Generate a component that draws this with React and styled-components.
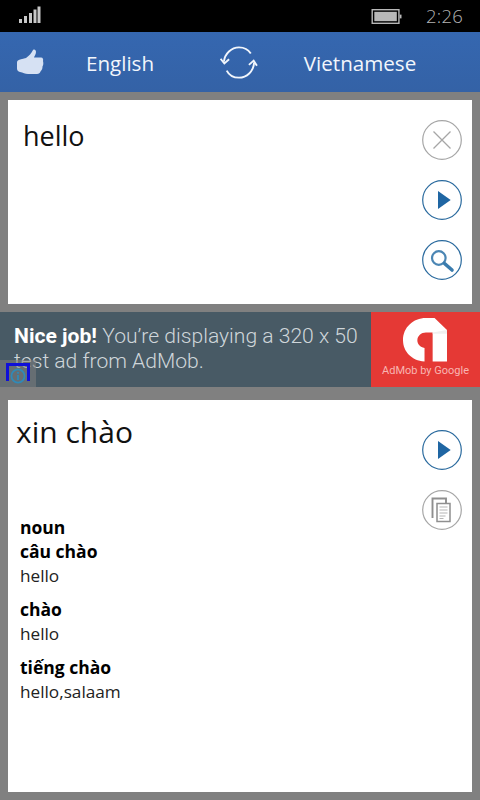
import React from "react";
import styled, { createGlobalStyle } from "styled-components";

const Global = createGlobalStyle`
  html, body { margin: 0; padding: 0; background: #808080; }
  body { font-family: "Open Sans", "Noto Sans", sans-serif; }
`;
const Screen = styled.div`
  width: 480px; height: 800px; background: #808080; display: flex; flex-direction: column; overflow: hidden;
`;
const StatusBar = styled.div`
  height: 32px; background: #000; display: flex; align-items: center; justify-content: space-between;
  padding: 0 17px 0 19px; box-sizing: border-box; color: #b4b4b4;
`;
const StatusRight = styled.div`display: flex; align-items: center; gap: 24px;`;
const Clock = styled.span`font-size: 18.5px; font-weight: 300; line-height: 32px; letter-spacing: 0.2px;`;
const Header = styled.header`
  height: 60px; background: linear-gradient(#3567b0, #3462a6); display: flex; align-items: center;
  color: #f2f6fc; margin-bottom: 8px;
`;
const ThumbSlot = styled.div`width: 60px; padding-left: 16px; box-sizing: border-box; display: flex; align-items: center;`;
const Lang = styled.div`
  font-size: 20.6px; line-height: 60px; text-align: center; width: ${p => p.$w}px; padding-top: 1px;
`;
const SwapSlot = styled.div`width: 118px; display: flex; justify-content: center; padding-top: 1px;`;
const Panel = styled.section`
  background: #fff; margin: 0 8px; height: ${p => p.$h}px; display: flex; justify-content: space-between;
  box-sizing: border-box;
`;
const InputText = styled.div`font-size: 27px; line-height: 36px; color: #111; padding: 18px 0 0 15px; font-weight: 400;`;
const Buttons = styled.div`
  display: flex; flex-direction: column; gap: ${p => p.$gap}px; padding: ${p => p.$top}px 10px 0 0; flex: none;
`;
const Ad = styled.div`
  height: 75px; margin-top: 8px; margin-bottom: 13px; background: #485a65; display: flex; position: relative; font-family: Roboto, sans-serif;
`;
const AdText = styled.div`
  width: 371px; box-sizing: border-box; padding: 11px 0 0 14px; font-size: 21.1px; line-height: 25px; color: #cfd6da; font-weight: 300;
  strong { color: #fff; font-weight: 700; }
`;
const AdLogo = styled.div`
  width: 109px; background: #e53935; display: flex; flex-direction: column; align-items: center; color: #f8b5b2;
  font-size: 11px; padding-top: 6px; box-sizing: border-box; gap: 2px; white-space: nowrap;
`;
const InfoBadge = styled.div`
  position: absolute; left: 0; top: 48px; width: 36px; height: 27px; background: rgba(128,128,128,0.55);
`;
const InfoFrame = styled.div`
  position: absolute; left: 6px; top: 3px; width: 24px; height: 18px; box-sizing: border-box;
  border: 3px solid #0f10d8; border-bottom: 0; padding-top: 2px;
  display: flex; justify-content: center;
`;
const Result = styled.div`display: flex; flex-direction: column; flex: 1;`;
const Translated = styled.div`font-size: 30px; line-height: 40px; color: #111; padding: 12px 0 0 8px;`;
const Defs = styled.div`padding: 63px 0 0 12px; color: #111; font-size: 17.5px; line-height: 24px;`;
const DefGroup = styled.div`margin-bottom: 9px;`;
const Bold = styled.div`font-weight: 700; color: #000; line-height: 24px;`;
const Word = styled.div`font-weight: 400; color: #222; line-height: 25px; font-size: 17.2px;`;

const Circle = ({ color, children }) => (
  <svg width="40" height="40" viewBox="0 0 40 40" fill="none" style={{ display: "block" }}>
    <circle cx="20" cy="20" r="19.3" stroke={color} strokeWidth="1.2" />
    {children}
  </svg>
);
const BLUE = "#2a6a9e";
const GREY = "#a6a6a6";
const Close = () => <Circle color={GREY}><path d="M11.5 11.5L28.5 28.5M28.5 11.5L11.5 28.5" stroke={GREY} strokeWidth="1.3" /></Circle>;
const Play = () => <Circle color={BLUE}><path d="M16 11L28.7 20L16 29Z" fill="#1f66a3" /></Circle>;
const Search = () => (
  <Circle color={BLUE}>
    <circle cx="16.8" cy="18" r="6.8" stroke="#4b86b4" strokeWidth="2.2" />
    <path d="M22.5 23.5L30 30" stroke="#3a7cae" strokeWidth="3.6" strokeLinecap="round" />
  </Circle>
);
const Copy = () => (
  <Circle color={GREY}>
    <path d="M10.5 28V8.5H24V13" stroke="#8f8f8f" strokeWidth="1.9" />
    <path d="M15 13.5H28V31.5H15Z" stroke="#8f8f8f" strokeWidth="1.5" fill="#fff" />
    <path d="M17.5 17H25.5M17.5 20H25.5M17.5 23H25.5M17.5 26H23.5M17.5 28.5H21.5" stroke="#b5b5b5" strokeWidth="1.2" />
  </Circle>
);
const Signal = () => (
  <svg width="22" height="18" viewBox="0 0 22 18" fill="#c8c8c8" style={{ display: "block", marginTop: -2 }}>
    <rect x="0" y="13" width="3" height="4" /><rect x="5" y="10" width="3" height="7" /><rect x="10" y="7" width="3" height="10" />
    <rect x="14.5" y="3.5" width="3" height="13.5" /><rect x="18.5" y="0.5" width="3" height="16.5" />
  </svg>
);
const Battery = () => (
  <svg width="31" height="15" viewBox="0 0 32 16" style={{ display: "block" }}>
    <rect x="0.75" y="0.75" width="28.5" height="14.5" fill="none" stroke="#b8b8b8" strokeWidth="1.5" />
    <rect x="3" y="3" width="24" height="10" fill="#b8b8b8" />
    <rect x="30" y="6" width="2" height="4" fill="#b8b8b8" />
  </svg>
);
const Thumb = () => (
  <svg width="28" height="26" viewBox="0 0 28 26" style={{ display: "block" }}>
    <path fill="#d6e1f3" d="M1 13.5C1 11.5 2.5 11 4 10.5L10 9C13 7 15.5 4 17 1C18.5 0 20 1 20 3C20 5 18.5 7 18 8.5L25 8.5C27 8.5 27.5 10.5 27 12C27.5 14 27.5 16 26.5 17.5C26.5 19.5 26 21 24.5 22.5C24 24 23 25 21 25L12 25C9 25 7 23.5 4 23C2 22.5 1 21.5 1 19.5Z" />
  </svg>
);
const Swap = () => (
  <svg width="38" height="34" viewBox="0 0 40 36" fill="none" stroke="#f2f6fc" strokeWidth="2" style={{ display: "block" }}>
    <path d="M4 16.5C5 8 12 1.5 20 1.5C25.5 1.5 30 4 32.5 8" />
    <path d="M36 17.5C35.5 27 28 33.5 20 33.5C14 33.5 9.5 31 7 26" />
    <path d="M0.5 13.5L4.5 18.5L9.5 14" />
    <path d="M30.5 20L35.5 15.5L39 21" />
  </svg>
);
const AdMobMark = () => (
  <svg width="44" height="44" viewBox="0 0 46 50" preserveAspectRatio="none" style={{ display: "block", marginLeft: -1 }}>
    <path fill="#fff" d="M24 0H33L46 13.5V49.5H31V16.5H24C19 16.5 15 20.5 15 25.5C15 29.5 18 33 22.5 34V49.5C9 48.5 0 38 0 25C0 11 10.5 0 24 0Z" />
    <path fill="#f0f0f0" d="M31 16.5L46 13.5V18H31Z" />
  </svg>
);
const Info = () => (
  <svg width="16" height="16" viewBox="0 0 18 18" fill="none" style={{ display: "block", flex: "none" }}>
    <circle cx="9" cy="9" r="7.4" stroke="#2f8ab8" strokeWidth="2" />
    <path d="M9 4.5V6.5M9 8V13.5" stroke="#2f8ab8" strokeWidth="2" />
  </svg>
);

export default function App() {
  return (
    <Screen>
      <Global />
      <StatusBar>
        <Signal />
        <StatusRight>
          <Battery />
          <Clock>2:26</Clock>
        </StatusRight>
      </StatusBar>
      <Header>
        <ThumbSlot><Thumb /></ThumbSlot>
        <Lang $w={120}>English</Lang>
        <SwapSlot><Swap /></SwapSlot>
        <Lang $w={124}>Vietnamese</Lang>
      </Header>
      <Panel $h={204}>
        <InputText>hello</InputText>
        <Buttons $top={20} $gap={20}>
          <Close />
          <Play />
          <Search />
        </Buttons>
      </Panel>
      <Ad>
        <AdText><strong>Nice job!</strong> You’re displaying a 320 x 50 test ad from AdMob.</AdText>
        <AdLogo>
          <AdMobMark />
          <span>AdMob by Google</span>
        </AdLogo>
        <InfoBadge>
          <InfoFrame><Info /></InfoFrame>
        </InfoBadge>
      </Ad>
      <Panel $h={392}>
        <Result>
          <Translated>xin chào</Translated>
          <Defs>
            <Bold>noun</Bold>
            <DefGroup><Bold>câu chào</Bold><Word>hello</Word></DefGroup>
            <DefGroup><Bold>chào</Bold><Word>hello</Word></DefGroup>
            <DefGroup><Bold>tiếng chào</Bold><Word>hello,salaam</Word></DefGroup>
          </Defs>
        </Result>
        <Buttons $top={30} $gap={20}>
          <Play />
          <Copy />
        </Buttons>
      </Panel>
    </Screen>
  );
}
